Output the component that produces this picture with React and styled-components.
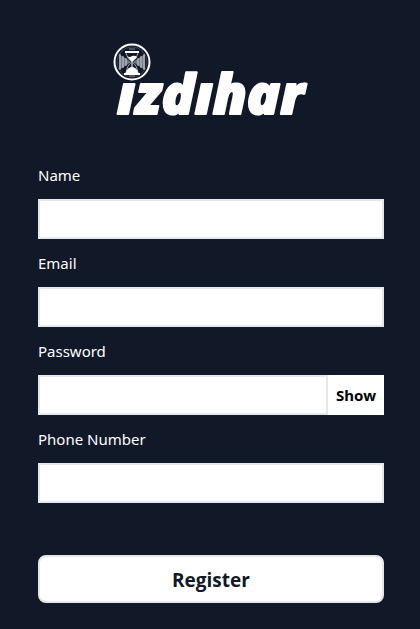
import React, { useState } from "react";
import styled, { createGlobalStyle } from "styled-components";

const GlobalStyle = createGlobalStyle`
  *, *::before, *::after { box-sizing: border-box; }
  body {
    margin: 0;
    background: #111827;
    font-family: "Noto Sans", "Open Sans", sans-serif;
  }
`;

const Page = styled.main`
  min-height: 100vh;
  padding: 40px 36px 26px 38px;
  color: #ffffff;
  background: #111827;
`;

const Brand = styled.header`
  display: flex;
  justify-content: center;
  margin-bottom: 19px;
`;

const Logo = styled.svg`
  display: block;
  width: 200px;
  height: 104px;
`;

const Wordmark = styled.text`
  font-family: "Open Sans", sans-serif;
  font-size: 55px;
  font-weight: 800;
  font-style: italic;
  fill: #ffffff;
  stroke: #ffffff;
  stroke-width: 2px;
  stroke-linejoin: round;
`;

const Form = styled.form`
  display: flex;
  flex-direction: column;
  gap: 12px;
`;

const Field = styled.div`
  display: flex;
  flex-direction: column;
  gap: 12px;
`;

const Label = styled.label`
  font-size: 15px;
  line-height: 24px;
`;

const Input = styled.input`
  flex: 1 1 auto;
  width: 100%;
  min-width: 0;
  min-height: 40px;
  padding: 0 8px;
  border: 2px solid #e5e7eb;
  border-radius: 0;
  background: #ffffff;
  color: #111827;
  font: inherit;
  font-size: 15px;
`;

const InputGroup = styled.div`
  display: flex;
`;

const ShowButton = styled.button`
  flex: none;
  padding: 0 8px;
  border: 0;
  background: #ffffff;
  color: #000000;
  font: inherit;
  font-size: 15px;
  font-weight: 700;
  cursor: pointer;
`;

const RegisterButton = styled.button`
  min-height: 48px;
  margin-top: 40px;
  padding: 2px 8px 0;
  border: 2px solid #e5e7eb;
  border-radius: 8px;
  background: #ffffff;
  color: #111827;
  font-family: "Open Sans", "Noto Sans", sans-serif;
  font-size: 19px;
  font-weight: 700;
  line-height: 28px;
  cursor: pointer;
`;

function BrandLogo() {
  return (
    <Logo viewBox="0 0 200 104" role="img" aria-label="izdihar">
      <circle cx="21" cy="22" r="17.5" fill="#111827" stroke="#fff" strokeWidth="2" />
      <circle cx="21" cy="22" r="15" fill="none" stroke="#596070" strokeWidth="0.6" />
      <path d="M8 14 20 22 8 30ZM34 14 22 22 34 30Z" fill="#747a86" />
      <path d="M9 14v16M12 16v12M15 18v8M33 14v16M30 16v12M27 18v8" stroke="#c9ccd2" strokeWidth="1" />
      <path d="M14 12h14M13 34h16" stroke="#fff" strokeWidth="1.8" />
      <path d="M15 13q1 6 6 9-5 3-6 11M27 13q-1 6-6 9 5 3 6 11" fill="none" stroke="#bfc3ca" strokeWidth="0.8" />
      <path d="M16 16q3 2 5 0 3-1 5 1l-5 5Z" fill="#fff" />
      <path d="M21 23v4q-5 1-6 6h12q-1-5-6-6Z" fill="#fff" stroke="#fff" strokeWidth="0.6" />
      <path d="M18 9h6M18 36h6" stroke="#858b96" strokeWidth="1" />
      <Wordmark x="6" y="74">ızdıhar</Wordmark>
    </Logo>
  );
}

function TextField({ id, label, type = "text" }) {
  return (
    <Field>
      <Label htmlFor={id}>{label}</Label>
      <Input id={id} name={id} type={type} />
    </Field>
  );
}

export default function App() {
  const [visible, setVisible] = useState(false);
  return (
    <>
      <GlobalStyle />
      <Page>
        <Brand>
          <BrandLogo />
        </Brand>
        <Form onSubmit={(event) => event.preventDefault()}>
          <TextField id="name" label="Name" />
          <TextField id="email" label="Email" type="email" />
          <Field>
            <Label htmlFor="password">Password</Label>
            <InputGroup>
              <Input id="password" name="password" type={visible ? "text" : "password"} />
              <ShowButton type="button" onClick={() => setVisible(!visible)}>
                {visible ? "Hide" : "Show"}
              </ShowButton>
            </InputGroup>
          </Field>
          <TextField id="phone" label="Phone Number" type="tel" />
          <RegisterButton type="submit">Register</RegisterButton>
        </Form>
      </Page>
    </>
  );
}
